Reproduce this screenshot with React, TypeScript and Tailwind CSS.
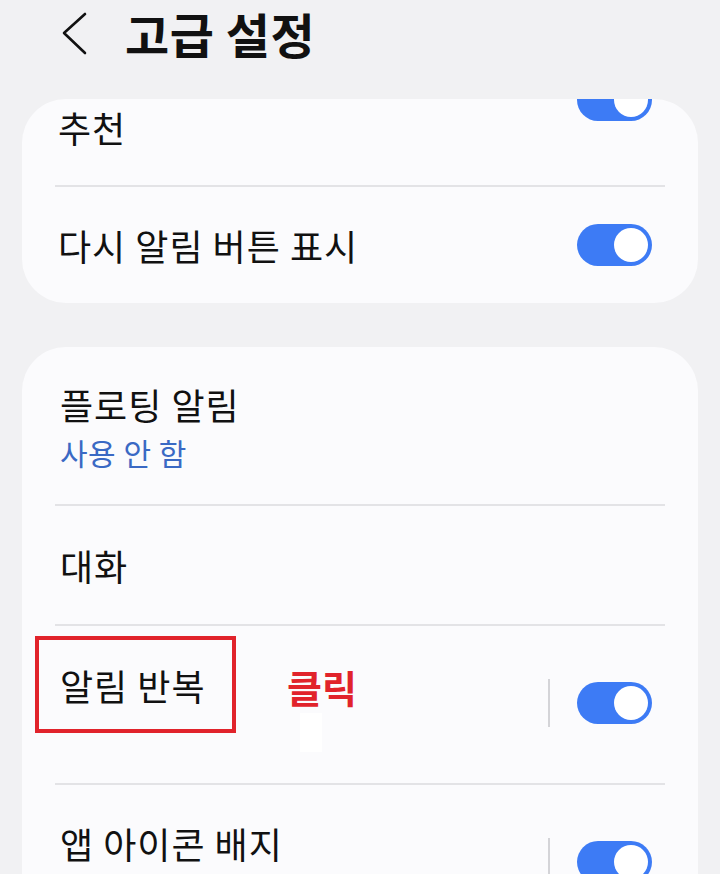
const font = { fontFamily: '"Noto Sans CJK KR", "Noto Sans", sans-serif' };

function Toggle() {
  return (
    <div className="flex h-[42px] w-[75px] shrink-0 items-center justify-end rounded-full bg-[#3d7bf5] p-[4px]">
      <div className="h-[34px] w-[34px] rounded-full bg-white" />
    </div>
  );
}

function Divider() {
  return <div className="mx-[33px] h-[2px] bg-[#e3e3e6]" />;
}

function SwitchGroup() {
  return (
    <div className="mt-[53px] flex items-center gap-[27px]">
      <div className="h-[48px] w-[2px] bg-[#d4d4d8]" />
      <Toggle />
    </div>
  );
}

export default function App() {
  return (
    <div
      className="h-[874px] w-[720px] overflow-hidden bg-[#f1f1f3] text-[#111]"
      style={font}
    >
      {/* header */}
      <div className="flex h-[99px] items-start">
        <svg
          className="ml-[60px] mt-[12px] shrink-0"
          width="30"
          height="44"
          viewBox="0 0 30 44"
          fill="none"
          stroke="#111"
          strokeWidth="2.6"
          strokeLinecap="round"
          strokeLinejoin="round"
        >
          <path d="M25 2 L4 21 L25 41" />
        </svg>
        <h1 className="ml-[35px] shrink-0 whitespace-nowrap pr-[4px] text-[48px] font-bold leading-[66px] tracking-[0.5px]">
          고급 설정
        </h1>
      </div>

      {/* card 1 (scrolled) */}
      <div className="mx-[22px] h-[204px] overflow-hidden rounded-[44px] bg-[#fbfbfd]">
        <div className="flex h-[86px] items-start justify-between pl-[36px] pr-[46px]">
          <span className="mt-[8px] text-[36px] leading-[40px] tracking-[1px]">추천</span>
          <div className="-mt-[20px]">
            <Toggle />
          </div>
        </div>
        <Divider />
        <div className="flex h-[116px] items-center justify-between pl-[36px] pr-[46px]">
          <span className="text-[36px] leading-[40px] tracking-[1px]">다시 알림 버튼 표시</span>
          <Toggle />
        </div>
      </div>

      {/* card 2 */}
      <div className="mx-[22px] mt-[44px] h-[560px] rounded-t-[44px] bg-[#fbfbfd]">
        <div className="flex h-[157px] flex-col justify-center pl-[38px]">
          <span className="text-[36px] leading-[48px] tracking-[1px]">플로팅 알림</span>
          <span className="mt-[4px] text-[30px] leading-[40px] tracking-[0.5px] text-[#3a69c4]">
            사용 안 함
          </span>
        </div>
        <Divider />
        <div className="flex h-[118px] items-center pl-[38px]">
          <span className="text-[36px] leading-[40px] tracking-[1px]">대화</span>
        </div>
        <Divider />

        <div className="flex h-[157px] items-start justify-between pl-[13px] pr-[46px]">
          <div className="flex items-start">
            <div className="mt-[10px] flex h-[97px] w-[201px] items-center border-[4px] border-[#e1232b] pl-[21px]">
              <span className="text-[36px] leading-[40px] tracking-[1px]">알림 반복</span>
            </div>
            <div className="ml-[51px] mt-[41px] flex flex-col">
              <span className="text-[38px] font-bold leading-[40px] text-[#e1232b]">
                클릭
              </span>
              <div className="ml-[13px] mt-[6px] h-[39px] w-[22px] bg-white" />
            </div>
          </div>
          <SwitchGroup />
        </div>
        <Divider />

        <div className="flex items-start justify-between pl-[38px] pr-[46px]">
          <span className="mt-[38px] text-[36px] leading-[40px] tracking-[1px]">앱 아이콘 배지</span>
          <SwitchGroup />
        </div>
      </div>
    </div>
  );
}
